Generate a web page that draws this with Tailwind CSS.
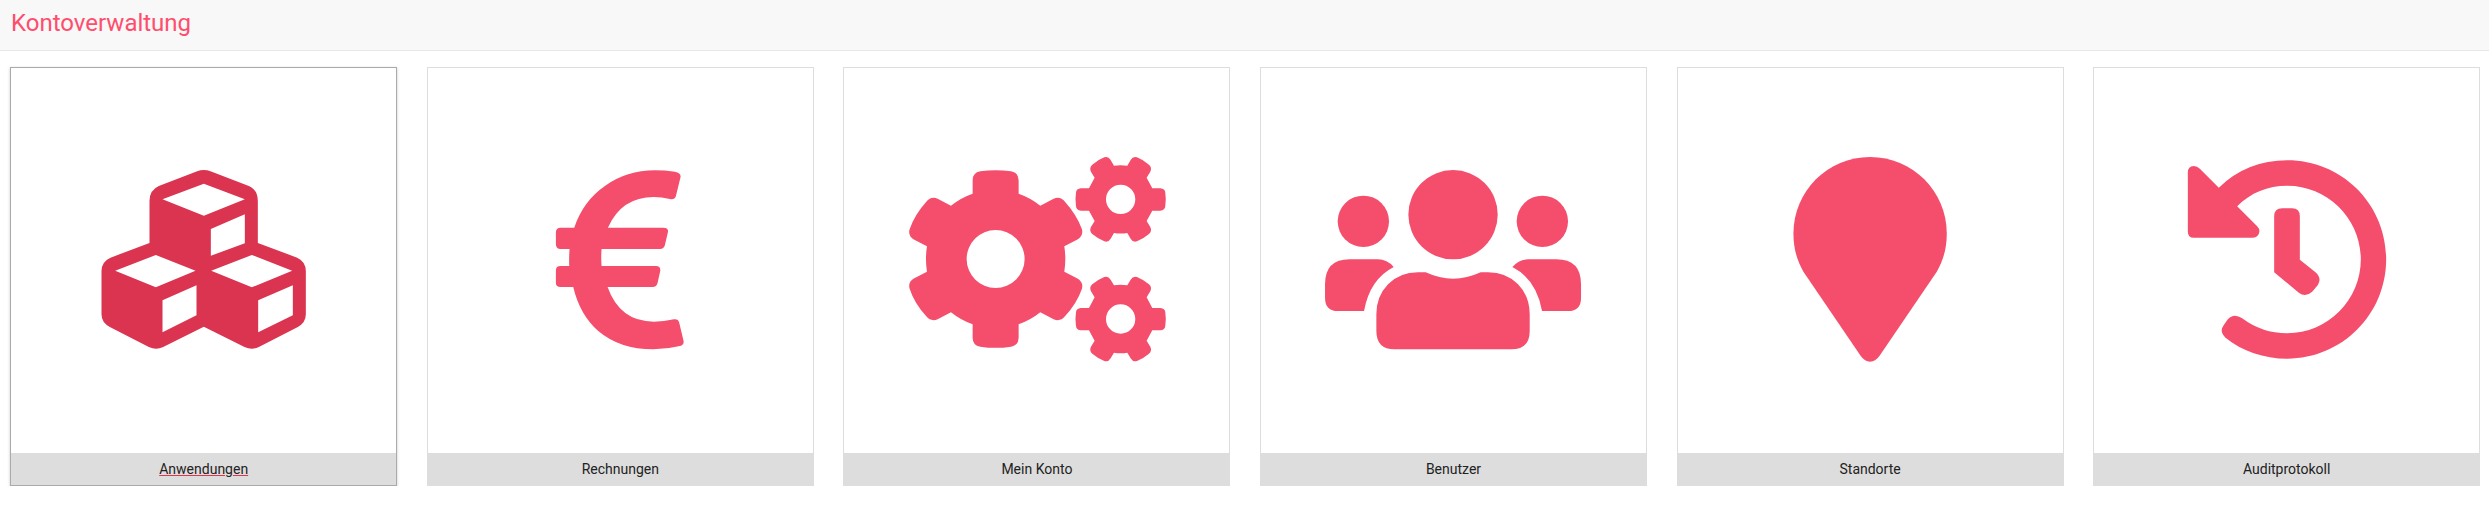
<!DOCTYPE html>
<html lang="de">
<head>
    <meta charset="UTF-8">
    <meta name="viewport" content="width=device-width, initial-scale=1.0">
    <title>Kontoverwaltung</title>
    <script src="https://cdn.jsdelivr.net/npm/@tailwindcss/browser@4"></script>
</head>
<body class="bg-white font-['Roboto',sans-serif]">
    <header class="h-[51px] bg-[#f8f8f8] border-b border-[#e7e7e7] pl-[11px] flex items-center">
        <h1 class="text-2xl font-normal text-[#ff4d6d] leading-none pb-[5px]">Kontoverwaltung</h1>
    </header>

    <main class="grid grid-cols-6 gap-x-[29.6px] pl-[10.2px] pr-[8.8px] pt-4">
        <!-- Anwendungen -->
        <a href="#" class="h-[419px] flex flex-col border border-[#aaa] shadow-[0_1px_3px_rgba(0,0,0,0.2)]">
            <div class="flex-1 flex items-center justify-center">
                <svg class="w-60 h-60 overflow-visible fill-[#da3451]" viewBox="70.5 0 720 720" fill-rule="evenodd">
                    <path d="M430 87Q440 87 450 91L565 135Q592 147 592 180V306L710 350Q736 362 736 390V520Q736 545 712 558L595 618Q574 628 552 618L430 557 308 618Q287 628 265 618L148 558Q123 545 123 520V390Q123 362 150 350L267 306V180Q267 147 295 135L410 91Q420 87 430 87ZM430 128 306 175 430 224 553 175ZM553 220 451 264V344L553 307ZM286 342 164 389 286 439 405 389ZM408 433 306 478V574L408 523ZM574 342 452 389 574 439 695 389ZM697 433 593 478V574L697 523Z"/>
                </svg>
            </div>
            <div class="h-8 bg-[#ddd] flex items-center justify-center text-sm text-[#222] underline decoration-[#e8304f]">Anwendungen</div>
        </a>

        <!-- Rechnungen -->
        <a href="#" class="h-[419px] flex flex-col border border-[#ddd]">
            <div class="flex-1 flex items-center justify-center">
                <svg class="w-60 h-60 overflow-visible fill-[#f44e6c]" viewBox="-59.7 0 720 720">
                    <path d="M465 92Q483 95 482 108L468 165Q464 177 450 174Q425 168 402 168Q305 168 264 260H430Q447 260 444 274L435 312Q432 324 420 324H245Q243 350 245 375H408Q423 375 421 390L413 426Q410 438 398 438H263Q300 542 402 542Q432 542 462 535Q475 533 478 545L491 600Q493 612 480 615Q440 625 400 625Q300 625 235 570Q180 522 160 438H122Q108 438 108 425V388Q108 375 122 375H148Q147 350 149 324H122Q108 324 108 310V274Q108 260 122 260H163Q190 180 255 135Q320 88 405 88Q435 88 465 92Z"/>
                </svg>
            </div>
            <div class="h-8 bg-[#ddd] flex items-center justify-center text-sm text-[#222]">Rechnungen</div>
        </a>

        <!-- Mein Konto -->
        <a href="#" class="h-[419px] flex flex-col border border-[#ddd]">
            <div class="flex-1 flex items-center justify-center">
                <svg class="w-60 h-60 overflow-visible fill-[#f44e6c]" viewBox="80.1 0 720 720" fill-rule="evenodd">
                    <path d="M247 118Q247 95 270 91Q316 84 362 91Q385 95 385 118V158Q420 170 450 194L490 173Q510 165 524 182Q560 222 575 265Q580 285 560 296L522 316Q528 354 522 392L560 412Q580 423 575 443Q560 486 524 526Q510 543 490 535L450 514Q420 538 385 550V590Q385 613 362 617Q316 624 270 617Q247 613 247 590V550Q212 538 182 514L142 535Q122 543 108 526Q72 486 58 443Q52 423 72 412L110 392Q104 354 110 316L72 296Q52 285 58 265Q72 222 108 182Q122 165 142 173L182 194Q212 170 247 158ZM316 267A87 87 0 1 0 316 441A87 87 0 1 0 316 267Z"/>
                    <path id="small-gear" d="M786 142H810Q824 143 825 155Q828 175 825 195Q824 208 810 209H786L769 240 780 258Q786 270 776 279Q758 294 740 301Q728 305 721 293L711 276Q691 279 671 276L661 293Q654 305 642 301Q624 294 606 279Q596 270 602 258L613 240 596 209H572Q558 208 557 195Q554 175 557 155Q558 143 572 142H596L613 110 602 92Q596 80 606 71Q624 56 642 49Q654 45 661 57L671 74Q691 71 711 74L721 57Q728 45 740 49Q758 56 776 71Q786 80 780 92L769 110ZM691 131A44 44 0 1 0 691 219A44 44 0 1 0 691 131Z"/>
                    <use href="#small-gear" y="359"/>
                </svg>
            </div>
            <div class="h-8 bg-[#ddd] flex items-center justify-center text-sm text-[#222]">Mein Konto</div>
        </a>

        <!-- Benutzer -->
        <a href="#" class="h-[419px] flex flex-col border border-[#ddd]">
            <div class="flex-1 flex items-center justify-center">
                <svg class="w-60 h-60 overflow-visible fill-[#f44e6c]" viewBox="69.9 0 720 720">
                    <circle cx="430" cy="221" r="134"/>
                    <circle cx="161" cy="241" r="77"/>
                    <circle cx="698" cy="241" r="77"/>
                    <path d="M348 394Q430 432 513 394H535Q590 394 625 430Q660 466 660 520V570Q660 625 605 625H255Q200 625 200 570V520Q200 466 235 430Q270 394 325 394Z"/>
                    <path d="M120 355H205Q232 355 252 378Q180 415 163 510H85Q46 510 46 470V430Q46 355 120 355Z"/>
                    <path d="M740 355H655Q628 355 608 378Q680 415 697 510H775Q814 510 814 470V430Q814 355 740 355Z"/>
                </svg>
            </div>
            <div class="h-8 bg-[#ddd] flex items-center justify-center text-sm text-[#222]">Benutzer</div>
        </a>

        <!-- Standorte -->
        <a href="#" class="h-[419px] flex flex-col border border-[#ddd]">
            <div class="flex-1 flex items-center justify-center">
                <svg class="w-60 h-60 overflow-visible fill-[#f44e6c]" viewBox="-30.3 0 720 720">
                    <path d="M330 48C457 48 560 150 560 278C560 325 548 360 530 392L358 645Q346 662 330 662Q314 662 302 645L130 392C112 360 100 325 100 278C100 150 203 48 330 48Z"/>
                </svg>
            </div>
            <div class="h-8 bg-[#ddd] flex items-center justify-center text-sm text-[#222]">Standorte</div>
        </a>

        <!-- Auditprotokoll -->
        <a href="#" class="h-[419px] flex flex-col border border-[#ddd]">
            <div class="flex-1 flex items-center justify-center">
                <svg class="w-60 h-60 overflow-visible fill-[#f44e6c]" viewBox="49.5 0 720 720">
                    <path d="M112 95Q112 75 130 75Q140 75 148 83L205 140Q290 58 410 58C575 58 707 190 707 355C707 520 575 653 410 653C340 653 275 630 225 590Q205 572 220 552L232 535Q250 515 275 532Q335 577 410 577C532 577 631 477 631 355C631 233 532 134 410 134C352 134 300 155 260 196L320 256Q330 266 325 278Q320 290 305 290H130Q112 290 112 272Z"/>
                    <path d="M395 202H425Q448 202 448 226V356L495 394Q515 412 502 432L485 452Q465 470 445 455L371 394V226Q371 202 395 202Z"/>
                </svg>
            </div>
            <div class="h-8 bg-[#ddd] flex items-center justify-center text-sm text-[#222]">Auditprotokoll</div>
        </a>
    </main>
</body>
</html>
